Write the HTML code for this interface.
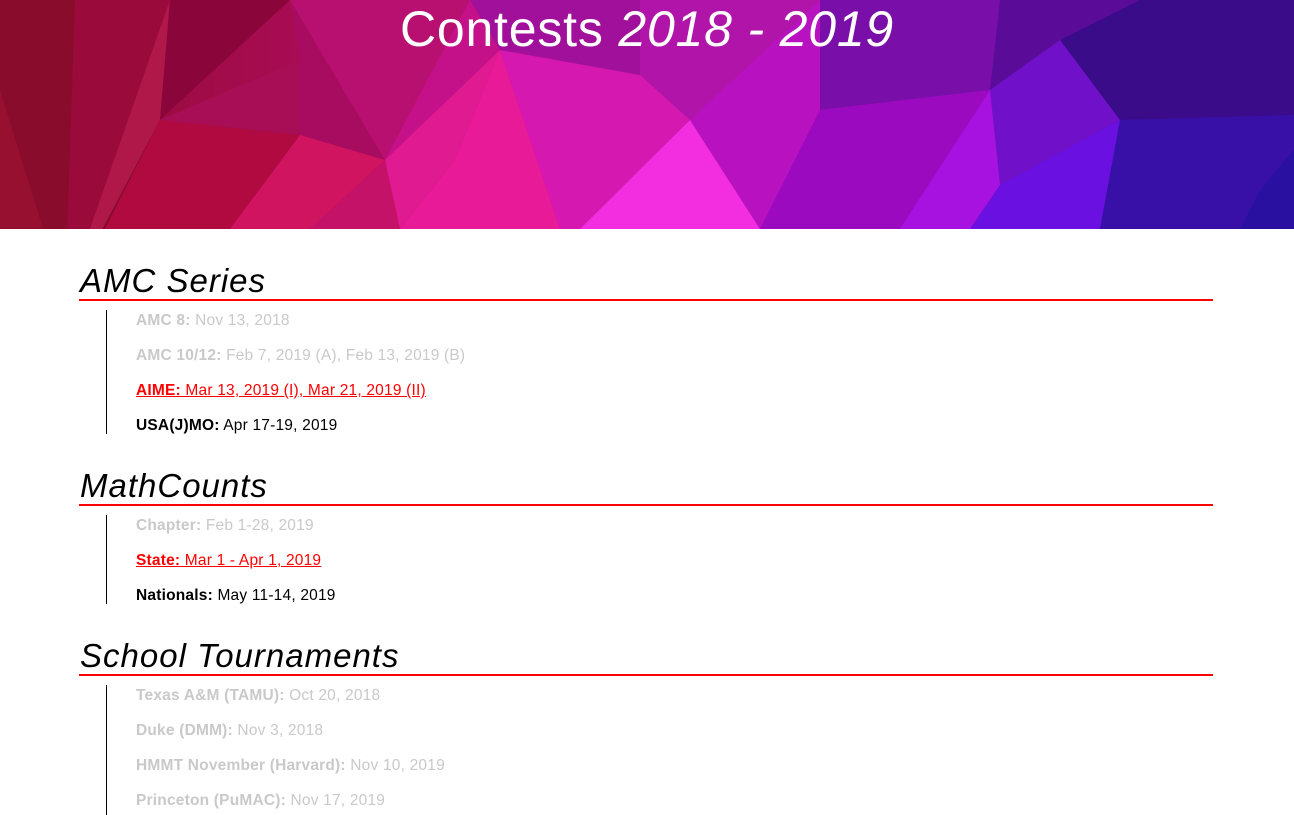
<!DOCTYPE html>
<html><head><meta charset="utf-8"><style>
body{margin:0;background:#fff;font-family:"Liberation Sans",sans-serif;width:1294px;height:815px;overflow:hidden;position:relative}
.hdr{position:absolute;left:0;top:0;width:1294px;height:229px}
.title{position:absolute;top:0;left:0;width:1294px;text-align:center;color:#fff;font-size:50px;line-height:58px;letter-spacing:0.8px}
h2{position:absolute;left:80px;margin:0;font-weight:normal;font-style:italic;font-size:33px;letter-spacing:1px;line-height:36px}
.rule{position:absolute;left:79px;width:1134px;height:2px;background:#f00}
.vl{position:absolute;left:106px;width:1px;background:#000}
.it{position:absolute;left:136px;font-size:15.5px;letter-spacing:0.2px;line-height:18px;white-space:nowrap}
.g{color:#c9c9c9}.r{color:#f00;text-decoration:underline}.k{color:#000}
</style></head><body>
<svg class="hdr" viewBox="0 0 1294 229" preserveAspectRatio="none">
<defs><linearGradient id="bg" x1="0" x2="1"><stop offset="0" stop-color="#8e0b2c"/><stop offset=".3" stop-color="#b00c60"/><stop offset=".5" stop-color="#d418b0"/><stop offset=".7" stop-color="#9a10c8"/><stop offset=".85" stop-color="#5a10b0"/><stop offset="1" stop-color="#32108a"/></linearGradient></defs>
<rect width="1294" height="229" fill="url(#bg)"/>
<polygon points="0,0 75,0 65,300 0,90" fill="#8a0c2c"/>
<polygon points="0,90 65,300 0,229" fill="#981030"/>
<polygon points="0,229 65,300 105,229" fill="#a80c30"/>
<polygon points="75,0 170,0 65,300" fill="#9a0a3a"/>
<polygon points="65,300 170,0 160,120" fill="#b0184a"/>
<polygon points="160,120 65,300 105,229" fill="#880c2a"/>
<polygon points="160,120 300,135 230,229 105,229" fill="#b00a40"/>
<polygon points="160,120 300,135 300,60" fill="#a80e55"/>
<polygon points="170,0 290,0 160,120" fill="#8a063a"/>
<polygon points="290,0 385,160 300,135 300,60" fill="#a80c60"/>
<polygon points="300,135 385,160 310,229 230,229" fill="#d01460"/>
<polygon points="290,0 470,0 385,160" fill="#b81070"/>
<polygon points="385,160 400,229 310,229" fill="#c41268"/>
<polygon points="385,160 500,50 470,0" fill="#c4118a"/>
<polygon points="385,160 500,50 455,160 400,229" fill="#e01a90"/>
<polygon points="500,50 560,229 400,229 455,160" fill="#e81a98"/>
<polygon points="500,50 640,75 690,120 580,229 560,229" fill="#d418b0"/>
<polygon points="470,0 640,0 640,75 500,50" fill="#a0109a"/>
<polygon points="640,0 820,0 690,120 640,75" fill="#b014a8"/>
<polygon points="690,120 760,229 580,229" fill="#f22ee0"/>
<polygon points="690,120 820,0 820,110 760,229" fill="#b812c0"/>
<polygon points="820,0 1000,0 990,90 820,110" fill="#7a0ea8"/>
<polygon points="820,110 990,90 900,229 760,229" fill="#9c0ac0"/>
<polygon points="990,90 1060,40 1120,120 1000,185" fill="#7010c8"/>
<polygon points="900,229 990,90 1000,185 970,229" fill="#a812e0"/>
<polygon points="1000,185 1120,120 1100,229 970,229" fill="#6a10e0"/>
<polygon points="1000,0 1140,0 1060,40 990,90" fill="#5a0c98"/>
<polygon points="1140,0 1294,0 1294,115 1120,120 1060,40" fill="#3a0c8a"/>
<polygon points="1120,120 1294,115 1294,229 1100,229" fill="#3810a8"/>
<polygon points="1260,190 1294,150 1294,229 1240,229" fill="#2a10a0"/>
</svg>
<div class="title">Contests <i>2018 - 2019</i></div>

<h2 style="top:263px">AMC Series</h2>
<div class="rule" style="top:299px"></div>
<div class="vl" style="top:310px;height:124px"></div>
<div class="it g" style="top:312px"><b>AMC 8:</b> Nov 13, 2018</div>
<div class="it g" style="top:347px"><b>AMC 10/12:</b> Feb 7, 2019 (A), Feb 13, 2019 (B)</div>
<div class="it r" style="top:382px"><b>AIME:</b> Mar 13, 2019 (I), Mar 21, 2019 (II)</div>
<div class="it k" style="top:417px"><b>USA(J)MO:</b> Apr 17-19, 2019</div>

<h2 style="top:468px">MathCounts</h2>
<div class="rule" style="top:504px"></div>
<div class="vl" style="top:515px;height:89px"></div>
<div class="it g" style="top:517px"><b>Chapter:</b> Feb 1-28, 2019</div>
<div class="it r" style="top:552px"><b>State:</b> Mar 1 - Apr 1, 2019</div>
<div class="it k" style="top:587px"><b>Nationals:</b> May 11-14, 2019</div>

<h2 style="top:638px">School Tournaments</h2>
<div class="rule" style="top:674px"></div>
<div class="vl" style="top:685px;height:130px"></div>
<div class="it g" style="top:687px"><b>Texas A&amp;M (TAMU):</b> Oct 20, 2018</div>
<div class="it g" style="top:722px"><b>Duke (DMM):</b> Nov 3, 2018</div>
<div class="it g" style="top:757px"><b>HMMT November (Harvard):</b> Nov 10, 2019</div>
<div class="it g" style="top:792px"><b>Princeton (PuMAC):</b> Nov 17, 2019</div>
</body></html>
